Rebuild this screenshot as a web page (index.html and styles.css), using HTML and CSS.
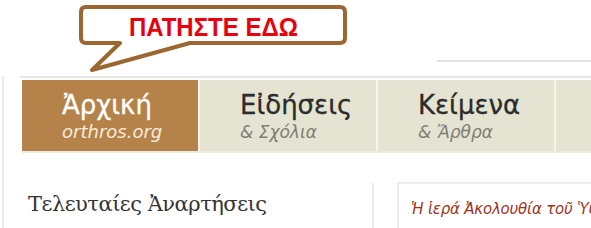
FILE: index.html
```html
<!DOCTYPE html>
<html lang="el">
<head>
<meta charset="utf-8">
<title>orthros.org</title>
<link rel="stylesheet" href="styles.css">
</head>
<body>
<div class="site">
  <div class="topbar"><div class="toprule"></div></div>
  <div class="frame">
    <div class="rule"></div>
    <nav class="nav">
      <a class="tab active" href="#"><span class="t1">Ἀρχική</span><span class="t2">orthros.org</span></a>
      <a class="tab" href="#"><span class="t1">Εἰδήσεις</span><span class="t2">&amp; Σχόλια</span></a>
      <a class="tab" href="#"><span class="t1">Κείμενα</span><span class="t2">&amp; Ἄρθρα</span></a>
      <a class="tab last" href="#"></a>
    </nav>
    <div class="content">
      <aside class="side">
        <h2 class="side-title">Τελευταίες Ἀναρτήσεις</h2>
      </aside>
      <div class="divider"></div>
      <section class="post">
        <p class="post-title">Ἡ ἱερά Ἀκολουθία τοῦ Ὑψώσεως</p>
      </section>
    </div>
  </div>
  <div class="callout">
    <svg class="bubble" width="280" height="72" viewBox="0 0 280 72">
      <path d="M8 7 H262 Q267 7 267 12 V38 Q267 43 262 43 H112 L14 70 L42 43 H8 Q3 43 3 38 V12 Q3 7 8 7 Z" fill="#fff" stroke="#9b6630" stroke-width="4" stroke-linejoin="round"/>
    </svg>
    <span class="callout-text">ΠΑΤΗΣΤΕ ΕΔΩ</span>
  </div>
</div>
</body>
</html>
```
FILE: styles.css
```css
html, body {
  margin: 0;
  padding: 0;
  background: #fff;
}
body {
  width: 591px;
  height: 228px;
  overflow: hidden;
  font-family: "DejaVu Sans", "Open Sans", sans-serif;
}
.site {
  position: relative;
  width: 591px;
  height: 228px;
  overflow: hidden;
}
.topbar {
  height: 62px;
  display: flex;
  align-items: flex-end;
}
.toprule {
  margin-left: 437px;
  flex: 1;
  height: 2px;
  background: #e3e3e3;
}
.frame {
  margin-left: 2px;
  border-left: 2px solid #ececec;
  height: 166px;
}
.rule {
  margin: 14px 0 0 16px;
  height: 2px;
  background: #e6e6e6;
}
.nav {
  margin: 2px 0 0 18px;
  display: flex;
  gap: 2px;
  height: 71px;
  background: #f6f4e8;
  border-bottom: 2px solid #ecebdc;
}
.tab {
  width: 176px;
  flex: none;
  display: flex;
  flex-direction: column;
  padding: 10px 0 0 40px;
  box-sizing: border-box;
  text-decoration: none;
  background: #e5e4d2;
}
.tab.active {
  background: #b5824a;
}
.tab.last {
  flex: 1;
  width: auto;
}
.t1 {
  font-size: 26px;
  line-height: 30px;
  color: #2c2c2c;
  -webkit-text-stroke: 0.3px currentColor;
}
.t2 {
  font-size: 17px;
  line-height: 24px;
  font-style: italic;
  color: #7e7e76;
}
.active .t1 { color: #fff; }
.active .t2 { color: #f7ecdc; font-size: 18px; }
.content {
  display: flex;
  padding-top: 25px;
}
.side {
  width: 368px;
  padding-left: 24px;
  box-sizing: border-box;
}
.side-title {
  margin: 14px 0 0;
  font-family: "DejaVu Serif", "Liberation Serif", serif;
  font-weight: normal;
  font-size: 21px;
  color: #333;
  white-space: nowrap;
  letter-spacing: -0.5px;
}
.divider {
  width: 2px;
  height: 60px;
  margin-top: 5px;
  background: #ececec;
}
.post {
  margin: 4px 0 0 23px;
  flex: 1;
  border: 2px solid #ececec;
  border-right: none;
  border-bottom: none;
  height: 60px;
  padding: 16px 0 0 12px;
  overflow: hidden;
  white-space: nowrap;
}
.post-title {
  margin: 0;
  font-size: 15px;
  font-style: italic;
  color: #9b3424;
  letter-spacing: -0.2px;
}
.callout {
  position: absolute;
  left: 78px;
  top: 0;
  width: 280px;
  height: 72px;
}
.bubble {
  display: block;
}
.callout-text {
  position: absolute;
  left: 51px;
  top: 10px;
  font-family: "Liberation Sans", Arial, sans-serif;
  font-weight: bold;
  font-size: 24px;
  line-height: 32px;
  color: #e8000b;
  white-space: nowrap;
  transform: scaleY(1.08);
  transform-origin: left top;
}
```
